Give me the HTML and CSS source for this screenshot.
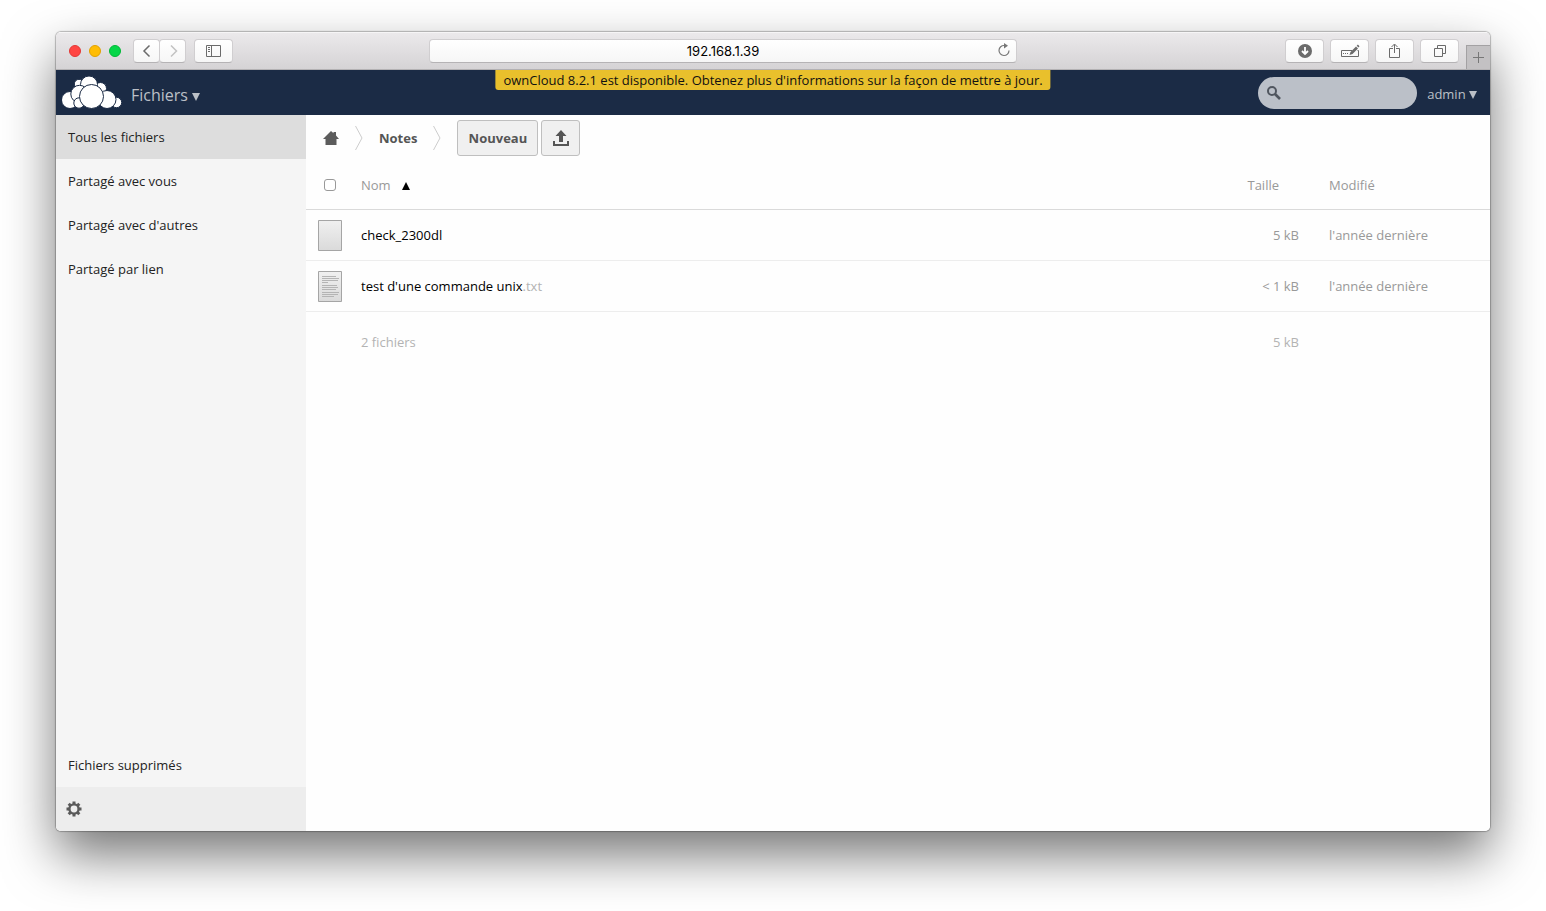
FILE: index.html
```html
<!DOCTYPE html>
<html lang="fr">
<head>
<meta charset="utf-8">
<title>Fichiers - ownCloud</title>
<link rel="stylesheet" href="styles.css">
</head>
<body>
<div class="window">
  <div class="toolbar">
    <div class="toolbar-left">
      <div class="lights">
        <button class="light light-close" aria-label="Fermer"></button>
        <button class="light light-min" aria-label="Réduire"></button>
        <button class="light light-max" aria-label="Agrandir"></button>
      </div>
      <div class="nav-buttons">
        <button class="tool tool-nav" aria-label="Précédent"><svg width="24" height="22" viewBox="0 0 24 22"><path d="M14.500 5.500L9 11l5.500 5.500" fill="none" stroke="#6b6b6b" stroke-width="1.500"/></svg></button>
        <button class="tool tool-nav" aria-label="Suivant"><svg width="24" height="22" viewBox="0 0 24 22"><path d="M10 5.500l5.500 5.500-5.500 5.500" fill="none" stroke="#c2c2c2" stroke-width="1.500"/></svg></button>
      </div>
      <button class="tool" aria-label="Barre latérale"><svg width="15" height="12" viewBox="0 0 15 12"><path d="M.5.500h14v11H.5zM5.500.500v11M2 2.500h2M2 4.500h2M2 6.500h2" fill="none" stroke="#6b6b6b"/></svg></button>
    </div>
    <div class="address">
      <input class="address-input" type="text" value="192.168.1.39" aria-label="Adresse">
      <button class="reload" aria-label="Recharger"><svg width="14" height="14" viewBox="0 0 14 14"><path d="M7.300 2.500A5 5 0 1 0 12 7.500" fill="none" stroke="#777" stroke-width="1.200"/><path d="M7 0l4 2.700L7 5.500z" fill="#777"/></svg></button>
    </div>
    <div class="toolbar-right">
      <button class="tool" aria-label="Téléchargements"><svg width="14" height="14" viewBox="0 0 14 14"><circle cx="7" cy="7" r="7" fill="#6b6b6b"/><path d="M7 3v6M4 7l3 3 3-3" fill="none" stroke="#fff" stroke-width="1.800"/></svg></button>
      <button class="tool" aria-label="Remplir le formulaire"><svg width="20" height="14" viewBox="0 0 20 14"><path d="M12 6.500H1.500v6h17v-6h-1" fill="none" stroke="#6b6b6b"/><path d="M3 9.500h1M5 9.500h1M7 9.500h1" stroke="#6b6b6b"/><path d="M9.500 11l1-3L16 2.500l2 2L12.500 10zM16.700 1.700L17.900.600l1.600 1.600-1 1.300z" fill="#6b6b6b"/></svg></button>
      <button class="tool" aria-label="Partager"><svg width="12" height="16" viewBox="0 0 12 16"><path d="M4 5.500H.5v9h10v-9H7M5.500 10V1.500M2.500 4l3-3 3 3" fill="none" stroke="#6b6b6b"/></svg></button>
      <button class="tool" aria-label="Onglets"><svg width="12" height="12" viewBox="0 0 12 12"><path d="M.5 3.500h8v8h-8zM3.500 3V.500h8v8H9" fill="none" stroke="#6b6b6b"/></svg></button>
      <button class="new-tab" aria-label="Nouvel onglet"><svg width="11" height="11" viewBox="0 0 11 11"><path d="M0 5.500h11M5.500 0v11" stroke="#777"/></svg></button>
    </div>
  </div>

  <header class="header">
    <a class="brand" href="#" aria-label="ownCloud">
      <svg width="60" height="33" viewBox="0 0 60 33" fill="#fff" stroke="#1b2b45" stroke-width="1"><circle cx="17" cy="8" r="4.700"/><circle cx="38.500" cy="12.500" r="6"/><circle cx="27" cy="8.500" r="8.500"/><circle cx="8" cy="24" r="8.500"/><circle cx="54.500" cy="26.500" r="5.200"/><circle cx="17.500" cy="18" r="8.700"/><circle cx="45" cy="23.500" r="9"/><circle cx="17" cy="27" r="5.200"/><circle cx="29.500" cy="20.500" r="12"/></svg>
    </a>
    <button class="app-menu">Fichiers <svg class="caret" width="8" height="8" viewBox="0 0 8 8"><path d="M0 0h8L4 8z" fill="currentColor"/></svg></button>
    <div class="notification">ownCloud 8.2.1 est disponible. Obtenez plus d'informations sur la façon de mettre à jour.</div>
    <label class="search">
      <svg width="16" height="16" viewBox="0 0 16 16" fill="none" stroke="#50565f"><circle cx="6" cy="6" r="4" stroke-width="2"/><path d="M9 9l5 5" stroke-width="2.600"/></svg>
      <input class="search-input" type="search" aria-label="Rechercher">
    </label>
    <button class="user-menu">admin <svg class="caret" width="8" height="8" viewBox="0 0 8 8"><path d="M0 0h8L4 8z" fill="currentColor"/></svg></button>
  </header>

  <div class="content">
    <nav class="sidebar">
      <a class="side-link side-link-active" href="#">Tous les fichiers</a>
      <a class="side-link" href="#">Partagé avec vous</a>
      <a class="side-link" href="#">Partagé avec d'autres</a>
      <a class="side-link" href="#">Partagé par lien</a>
      <a class="side-link side-link-trash" href="#">Fichiers supprimés</a>
      <button class="settings" aria-label="Paramètres"><svg width="16" height="16" viewBox="-8 -8 16 16"><g fill="#5a5a5a"><path id="tooth" d="M-1.500-7.500h3v15h-3z"/><use href="#tooth" transform="rotate(45)"/><use href="#tooth" transform="rotate(90)"/><use href="#tooth" transform="rotate(135)"/><circle r="5.800"/></g><circle r="3.400" fill="#ededed"/></svg></button>
    </nav>

    <main class="files">
      <div class="controls">
        <a class="crumb-home" href="#" aria-label="Accueil"><svg width="16" height="14" viewBox="0 0 16 14"><path d="M8 0l2.500 2.300V1H13v3.500L16 8h-2.500v6h-11V8H0z" fill="#5c5c5c"/></svg></a>
        <svg class="crumb-sep" width="8" height="26" viewBox="0 0 8 26"><path d="M.5 1l6.500 12L.5 25" fill="none" stroke="#ccc"/></svg>
        <a class="crumb" href="#">Notes</a>
        <svg class="crumb-sep" width="8" height="26" viewBox="0 0 8 26"><path d="M.5 1l6.500 12L.5 25" fill="none" stroke="#ccc"/></svg>
        <button class="button button-new">Nouveau</button>
        <button class="button button-upload" aria-label="Envoyer"><svg width="16" height="16" viewBox="0 0 16 16" fill="#555"><path d="M8 0l5.500 6H10v6H6V6H2.500zM0 11h2v3h12v-3h2v5H0z"/></svg></button>
      </div>
      <table class="table">
        <thead>
          <tr>
            <th class="col-select"><input class="check" type="checkbox" aria-label="Tout sélectionner"></th>
            <th class="col-name">Nom <svg class="sort" width="8" height="8" viewBox="0 0 8 8"><path d="M0 8h8L4 0z"/></svg></th>
            <th class="col-size">Taille</th>
            <th class="col-date">Modifié</th>
          </tr>
        </thead>
        <tbody>
          <tr>
            <td class="col-select"><svg class="file-icon" width="24" height="31" viewBox="0 0 24 31"><defs><linearGradient id="paper" x2="0" y2="1"><stop stop-color="#f0f0f0"/><stop offset="1" stop-color="#dadada"/></linearGradient></defs><path d="M.5.500h23v30H.5z" fill="url(#paper)" stroke="#a5a5a5"/></svg></td>
            <td class="col-name"><a class="file" href="#">check_2300dl</a></td>
            <td class="col-size">5 kB</td>
            <td class="col-date">l'année dernière</td>
          </tr>
          <tr>
            <td class="col-select"><svg class="file-icon" width="24" height="31" viewBox="0 0 24 31"><path d="M.5.500h23v30H.5z" fill="url(#paper)" stroke="#a5a5a5"/><path d="M4 5.500h14M4 7.500h17M4 9.500h16M4 11.500h6M4 14.500h15M4 16.500h16M4 18.500h14M4 21.500h17M4 23.500h16M4 25.500h12" stroke="#b4b4b4"/></svg></td>
            <td class="col-name"><a class="file" href="#">test d'une commande unix<span class="ext">.txt</span></a></td>
            <td class="col-size">&lt; 1 kB</td>
            <td class="col-date">l'année dernière</td>
          </tr>
        </tbody>
        <tfoot>
          <tr>
            <td class="col-select"></td>
            <td class="col-name">2 fichiers</td>
            <td class="col-size">5 kB</td>
            <td class="col-date"></td>
          </tr>
        </tfoot>
      </table>
    </main>
  </div>
</div>
</body>
</html>
```

FILE: styles.css
```css
* { box-sizing: border-box; }

body {
  margin: 0;
  min-height: 100vh;
  padding: 32px 56px 80px;
  display: flex;
  background: #fff;
  font: 13px/20px "Open Sans", sans-serif;
  color: #333;
}

button, input { font: inherit; margin: 0; }
button { padding: 0; border: 0; background: none; color: inherit; }
a { color: inherit; text-decoration: none; }
svg { display: block; flex: none; }

.window {
  flex: 1;
  min-width: 0;
  display: flex;
  flex-direction: column;
  border-radius: 5px;
  overflow: hidden;
  box-shadow: 0 0 1px 1px rgba(0, 0, 0, .25), 0 24px 52px rgba(0, 0, 0, .54);
}

/* Browser toolbar */
.toolbar {
  display: flex;
  align-items: center;
  height: 38px;
  background: linear-gradient(#ebe9eb, #d5d3d5);
  border-top: 1px solid #f6f5f6;
  border-bottom: 1px solid #b3b1b3;
}
.toolbar-left { flex: 0 1 373px; display: flex; align-items: center; padding-left: 13px; }
.toolbar-right { flex: 0 1 473px; align-self: stretch; display: flex; align-items: center; justify-content: flex-end; gap: 7px; }
.lights { display: flex; gap: 8px; margin-right: 12px; }
.light { width: 12px; height: 12px; border-radius: 50%; }
.light-close { background: #ff4543; border: 1px solid #e33735; }
.light-min { background: #ffbd05; border: 1px solid #e2a100; }
.light-max { background: #06d648; border: 1px solid #00b836; }
.nav-buttons { display: flex; margin-right: 8px; }
.tool {
  display: flex;
  align-items: center;
  justify-content: center;
  width: 39px;
  height: 24px;
  border: 1px solid #d0ced0;
  border-bottom-color: #b5b3b5;
  border-radius: 4px;
  background: linear-gradient(#fff, #f6f6f6);
}
.tool-nav { width: 27px; }
.tool-nav + .tool-nav { margin-left: -1px; }
.toolbar-right .tool + .tool { margin-left: -1px; }
.address { flex: 1 1 587px; position: relative; }
.address-input {
  display: block;
  width: 100%;
  height: 24px;
  padding: 0 30px;
  border: 1px solid #d0ced0;
  border-bottom-color: #b5b3b5;
  border-radius: 4px;
  background: linear-gradient(#fff, #f6f6f6);
  text-align: center;
  color: #000;
  font: 13px Inter, sans-serif;
}
.reload { position: absolute; right: 6px; top: 4px; }
.new-tab {
  align-self: flex-end;
  display: flex;
  align-items: center;
  justify-content: center;
  width: 24px;
  height: 24px;
  background: #c3c1c3;
  border: 1px solid #a3a1a3;
  border-width: 1px 0 0 1px;
}

/* Application header */
.header {
  position: relative;
  display: flex;
  align-items: center;
  height: 45px;
  padding: 0 13px 0 6px;
  background: #1b2b45;
  color: #bbc0c7;
}
.brand { margin-right: 9px; }
.app-menu { font-size: 16px; margin-top: 4px; }
.caret { display: inline-block; }
.user-menu { margin-top: 2px; }
.notification {
  position: absolute;
  top: 0;
  left: 50%;
  transform: translateX(-50%);
  padding: 0 8px;
  border-radius: 0 0 3px 3px;
  background: #e9c02c;
  color: #111;
  white-space: nowrap;
}
.search {
  display: flex;
  align-items: center;
  width: 159px;
  height: 32px;
  margin-left: auto;
  margin-right: 10px;
  padding: 0 8px;
  border-radius: 16px;
  background: #bbc0c8;
}
.search-input { flex: 1; min-width: 0; height: 28px; padding: 0 4px; border: 0; background: none; outline: 0; }

/* Sidebar */
.content { flex: 1; display: flex; }
.sidebar { flex: 0 0 250px; display: flex; flex-direction: column; background: #f5f5f5; }
.side-link { padding: 12px; color: #222; }
.side-link-active { background: #ddd; }
.side-link-trash { margin-top: auto; }
.settings { height: 44px; padding-left: 10px; background: #ededed; }

/* Files */
.files { flex: 1; min-width: 0; background: #fefefe; }
.controls { display: flex; align-items: center; height: 45px; padding-left: 17px; }
.crumb-sep { margin: 0 16px; }
.crumb { color: #555; font-weight: 700; }
.button {
  height: 36px;
  border: 1px solid #bfbfbf;
  border-radius: 3px;
  background: #f0f0f0;
  color: #555;
  font-weight: 700;
}
.button-new { width: 81px; margin-right: 3px; }
.button-upload { display: flex; align-items: center; justify-content: center; width: 39px; }

.table { width: 100%; border-spacing: 0; table-layout: fixed; color: #999; }
.table th, .table td { padding: 0; height: 51px; text-align: left; font-weight: 400; border-bottom: 1px solid #ededed; }
.table th { height: 50px; border-bottom-color: #dadada; }
.table tfoot td { height: 60px; border: 0; color: #b3b3b3; }
.table .col-select { width: 55px; padding-left: 12px; }
.table th.col-select { padding-left: 18px; }
.table .col-size { width: 110px; padding-right: 30px; text-align: right; }
.table th.col-size { padding-right: 50px; }
.table .col-date { width: 161px; }
.check {
  appearance: none;
  display: block;
  width: 12px;
  height: 12px;
  border: 1px solid #999;
  border-radius: 3px;
  background: #fff;
}
.sort { display: inline-block; margin-left: 8px; }
.file { color: #000; }
.ext { color: #b3b3b3; }
```
